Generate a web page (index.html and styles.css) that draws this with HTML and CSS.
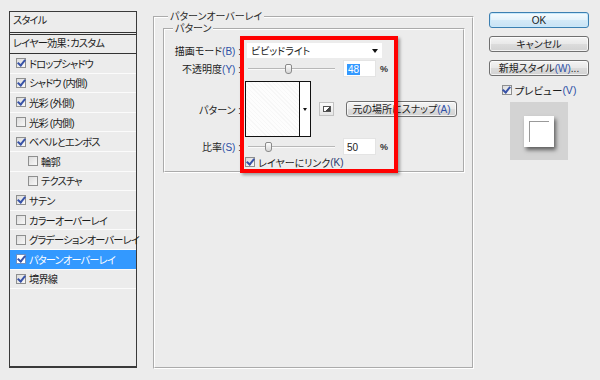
FILE: index.html
```html
<!DOCTYPE html>
<html lang="ja">
<head>
    <meta charset="UTF-8">
    <title>レイヤースタイル</title>
    <link rel="stylesheet" href="styles.css">
</head>
<body>
<div class="dialog">
    <div class="styles">
        <div class="styles-head">スタイル</div>
        <div class="styles-sub">レイヤー効果：カスタム</div>
        <ul class="fx-list">
            <li class="fx"><span class="cb on"></span>ドロップシャドウ</li>
            <li class="fx"><span class="cb on"></span>シャドウ (内側)</li>
            <li class="fx"><span class="cb on"></span>光彩 (外側)</li>
            <li class="fx"><span class="cb"></span>光彩 (内側)</li>
            <li class="fx"><span class="cb on"></span>ベベルとエンボス</li>
            <li class="fx sub"><span class="cb"></span>輪郭</li>
            <li class="fx sub"><span class="cb"></span>テクスチャ</li>
            <li class="fx"><span class="cb on"></span>サテン</li>
            <li class="fx"><span class="cb"></span>カラーオーバーレイ</li>
            <li class="fx"><span class="cb"></span>グラデーションオーバーレイ</li>
            <li class="fx selected"><span class="cb on"></span>パターンオーバーレイ</li>
            <li class="fx"><span class="cb on"></span>境界線</li>
        </ul>
    </div>

    <fieldset class="group outer">
        <legend>パターンオーバーレイ</legend>
        <fieldset class="group inner">
            <legend>パターン</legend>

            <div class="row row-mode">
                <label class="lbl">描画モード<span class="key">(B)</span> :</label>
                <div class="select">ビビッドライト<span class="arrow"></span></div>
            </div>

            <div class="row row-num">
                <label class="lbl">不透明度<span class="key">(Y)</span> :</label>
                <div class="slider"><span class="thumb" style="margin-left: 37px"></span></div>
                <div class="num"><span class="sel">48</span></div>
                <span class="pct">%</span>
            </div>

            <div class="row row-pattern">
                <label class="lbl">パターン :</label>
                <div class="swatch"><div class="swatch-img"></div><span class="swatch-drop"></span></div>
                <button class="icon-btn" type="button"><span class="icon-new"></span></button>
                <button class="btn snap" type="button">元の場所にスナップ<span class="key">(A)</span></button>
            </div>

            <div class="row row-num">
                <label class="lbl">比率<span class="key">(S)</span> :</label>
                <div class="slider"><span class="thumb" style="margin-left: 17px"></span></div>
                <div class="num">50</div>
                <span class="pct">%</span>
            </div>

            <div class="row row-link">
                <span class="cb on"></span>レイヤーにリンク<span class="key dark">(K)</span>
            </div>
        </fieldset>
    </fieldset>

    <div class="actions">
        <button class="btn default" type="button">OK</button>
        <button class="btn" type="button">キャンセル</button>
        <button class="btn" type="button">新規スタイル<span class="key">(W)</span>...</button>
        <div class="preview-check"><span class="cb on"></span>プレビュー<span class="key">(V)</span></div>
        <div class="preview">
            <div class="preview-square"><div class="preview-inner"></div></div>
        </div>
    </div>

    <div class="highlight"></div>
</div>
</body>
</html>
```

FILE: styles.css
```css
* {
    box-sizing: border-box;
}

body {
    margin: 0;
    background-color: #ececec;
    font-family: "Liberation Sans", "Noto Sans CJK JP", sans-serif;
    font-size: 10px;
    color: #1c1c1c;
    font-feature-settings: "palt";
}

.dialog {
    position: relative;
    width: 600px;
    height: 380px;
    display: flex;
    align-items: flex-start;
    padding: 11px 0 0 9px;
}

.key {
    color: #2d4fa6;
}

.key.dark {
    color: #2a3a70;
}

/* checkbox */
.cb {
    display: inline-flex;
    align-items: center;
    justify-content: center;
    width: 10px;
    height: 10px;
    border: 1px solid #8e8f8f;
    background: linear-gradient(135deg, #dcdcdc, #f8f8f8);
    margin-right: 3px;
    flex: none;
    letter-spacing: 0;
}

.cb.on::after {
    content: "";
    width: 3px;
    height: 6px;
    margin-top: -2px;
    border-right: 2px solid #3853a8;
    border-bottom: 2px solid #3853a8;
    transform: rotate(40deg);
}

/* left list */
.styles {
    width: 128px;
    height: 357px;
    border: 1px solid #3a3a3a;
    border-bottom-width: 2px;
    font-size: 10.2px;
    letter-spacing: -0.8px;
}

.styles-head {
    height: 23px;
    line-height: 18px;
    padding-left: 3px;
    border-bottom: 3px double #333;
}

.styles-sub {
    height: 19px;
    line-height: 18px;
    padding-left: 3px;
    border-bottom: 1px solid #333;
}

.fx-list {
    list-style: none;
    margin: 0;
    padding: 0;
}

.fx {
    display: flex;
    align-items: center;
    height: 19.6px;
    padding-left: 6px;
    border-bottom: 1px solid #fbfbfb;
    white-space: nowrap;
}

.fx.sub {
    padding-left: 18px;
}

.fx.selected {
    background-color: #3399ff;
    color: #fff;
}

.fx.selected .cb {
    background: #fff;
    border-color: #6f8fc0;
}

/* group boxes */
.group {
    margin: 0;
    border: 2px groove #fff;
    min-width: 0;
}

.group legend {
    padding: 0 2px;
    line-height: 12px;
    color: #2a2a2a;
}

.outer {
    width: 321px;
    height: 358px;
    margin: 0 0 0 16px;
    padding: 0 7px 0 8px;
}

.outer > legend {
    margin-left: 5px;
}

.inner {
    height: 150px;
    padding: 8px 0 0 0;
}

.inner > legend {
    margin-left: 8px;
}

.row {
    display: flex;
    align-items: center;
}

.lbl {
    width: 77px;
    flex: none;
    text-align: right;
    padding-right: 1px;
    white-space: nowrap;
}

.row-mode {
    height: 15px;
}

.select {
    position: relative;
    display: flex;
    align-items: center;
    width: 135px;
    height: 15px;
    margin-left: 5px;
    padding-left: 4px;
    background-color: #fff;
}

.select .arrow {
    margin-left: auto;
    margin-right: 4px;
    border-left: 3px solid transparent;
    border-right: 3px solid transparent;
    border-top: 4px solid #111;
}

.row-num {
    height: 17px;
    margin-top: 2px;
}

.row-num + .row-pattern {
    margin-top: 4px;
}

.row-pattern + .row-num {
    margin-top: 1px;
}

.slider {
    width: 87px;
    height: 11px;
    margin-left: 6px;
    display: flex;
    align-items: center;
    background: linear-gradient(#ececec 5px, #b8b8b8 5px, #b8b8b8 6px, #fafafa 6px, #fafafa 7px, #ececec 7px);
}

.thumb {
    width: 7px;
    height: 10px;
    border: 1px solid #8a8a8a;
    border-radius: 2px 2px 3px 3px;
    background: linear-gradient(#fdfdfd, #d6d6d6);
}

.num {
    width: 33px;
    height: 17px;
    margin-left: 8px;
    padding: 3px 0 0 3px;
    line-height: 11px;
    background-color: #fff;
    border: 1px solid #e4e4e4;
}

.num .sel {
    background-color: #3399ff;
    color: #fff;
    padding: 0 1px;
}

.pct {
    margin-left: 4px;
    font-size: 9px;
    font-weight: bold;
    color: #333;
}

.row-pattern {
    height: 56px;
}

.swatch {
    display: flex;
    width: 66px;
    height: 56px;
    margin-left: 3px;
    border: 1px solid #111;
    background-color: #fff;
}

.swatch-img {
    width: 54px;
    background: repeating-linear-gradient(45deg, #fdfdfd 0 2px, #f7f7f7 2px 3px);
    border-right: 1px solid #111;
}

.swatch-drop {
    flex: 1;
    display: flex;
    align-items: center;
    justify-content: center;
}

.swatch-drop::after {
    content: "";
    border-left: 2px solid transparent;
    border-right: 2px solid transparent;
    border-top: 3px solid #111;
}

.icon-btn {
    width: 15px;
    height: 14px;
    margin-left: 8px;
    padding: 0;
    display: flex;
    align-items: center;
    justify-content: center;
    border: 1px solid #c2c2c2;
    background: linear-gradient(#fafafa, #e6e6e6);
}

.icon-new {
    width: 8px;
    height: 6px;
    border: 1px solid #555;
    background: linear-gradient(135deg, #fff 60%, #444 60%);
}

.btn {
    display: block;
    height: 16px;
    padding: 0;
    border: 1px solid #707070;
    border-radius: 3px;
    background: linear-gradient(#f4f4f4, #e8e8e8 50%, #dcdcdc 51%, #d2d2d2);
    font-family: inherit;
    font-size: 10px;
    line-height: 13px;
    color: #1c1c1c;
    font-feature-settings: "palt";
    box-shadow: inset 0 0 0 1px rgba(255, 255, 255, 0.7);
}

.snap {
    width: 111px;
    height: 16px;
    margin-left: 12px;
}

.row-link {
    height: 12px;
    margin-top: 1px;
    padding-left: 80px;
}

/* right column */
.actions {
    width: 100px;
    margin: 1px 0 0 15px;
    display: flex;
    flex-direction: column;
    align-items: center;
}

.actions .btn {
    width: 100px;
    margin-bottom: 8px;
}

.actions .btn + .btn + .btn {
    margin-bottom: 0;
}

.btn.default {
    border-color: #3c7fb1;
    background: linear-gradient(#f6fbfe, #e4f2fb 50%, #d4eaf8 51%, #c8e2f4);
    box-shadow: inset 0 0 0 1px #c8e8fa;
}

.preview-check {
    display: flex;
    align-items: center;
    height: 12px;
    margin-top: 8px;
    font-size: 10.5px;
}

.preview {
    width: 58px;
    height: 58px;
    margin-top: 6px;
    background-color: #d3d3d3;
    display: flex;
    align-items: center;
    justify-content: center;
}

.preview-square {
    width: 30px;
    height: 31px;
    padding: 5px;
    background-color: #fff;
    box-shadow: 2px 3px 4px rgba(0, 0, 0, 0.55);
}

.preview-inner {
    width: 100%;
    height: 100%;
    border-top: 1px solid #999;
    border-left: 1px solid #999;
}

/* annotation */
.highlight {
    position: absolute;
    left: 240px;
    top: 36px;
    width: 158px;
    height: 137px;
    border: 4px solid #ff0000;
    box-shadow: 2px 2px 3px rgba(0, 0, 0, 0.35);
    pointer-events: none;
}
```
